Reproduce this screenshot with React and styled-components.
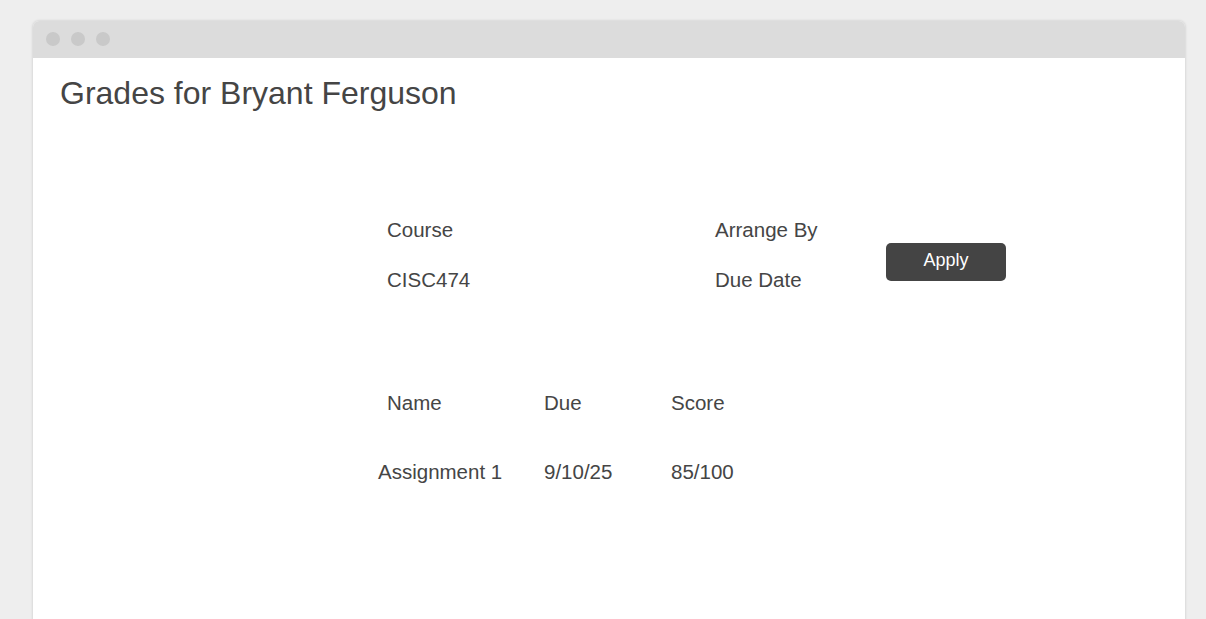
import React from 'react'
import styled, { createGlobalStyle } from 'styled-components'

const GlobalStyle = createGlobalStyle`
    html, body {
        margin: 0;
        padding: 0;
        background: #eeeeee;
        font-family: "Liberation Sans", Arial, sans-serif;
        color: #454545;
        overflow: hidden;
    }
`

const grades = [
    { name: 'Assignment 1', due: '9/10/25', score: '85/100' },
]

export default function App() {
    return (
        <>
            <GlobalStyle />
            <Page>
                <Window>
                    <TitleBar>
                        <Dot />
                        <Dot />
                        <Dot />
                    </TitleBar>
                    <Content>
                        <Heading>Grades for Bryant Ferguson</Heading>
                        <Filters>
                            <FilterColumn width="328px">
                                <FilterText>Course</FilterText>
                                <FilterText>CISC474</FilterText>
                            </FilterColumn>
                            <FilterColumn width="171px">
                                <FilterText>Arrange By</FilterText>
                                <FilterText>Due Date</FilterText>
                            </FilterColumn>
                            <ApplyButton>Apply</ApplyButton>
                        </Filters>
                        <Table>
                            <HeadCell indent="9px">Name</HeadCell>
                            <HeadCell>Due</HeadCell>
                            <HeadCell>Score</HeadCell>
                            {grades.map(g => (
                                <React.Fragment key={g.name}>
                                    <Cell>{g.name}</Cell>
                                    <Cell>{g.due}</Cell>
                                    <Cell>{g.score}</Cell>
                                </React.Fragment>
                            ))}
                        </Table>
                    </Content>
                </Window>
            </Page>
        </>
    )
}

const Page = styled.div`
    height: 619px;
    padding: 21px 21px 0 33px;
    box-sizing: border-box;
`

const Window = styled.div`
    height: 620px;
    background: #ffffff;
    border-radius: 6px 6px 0 0;
    box-shadow: 0 0 3px rgba(0, 0, 0, 0.18);
    display: flex;
    flex-direction: column;
`

const TitleBar = styled.div`
    height: 37px;
    background: #dcdcdc;
    border-radius: 6px 6px 0 0;
    display: flex;
    align-items: center;
    gap: 11px;
    padding-left: 13px;
`

const Dot = styled.span`
    width: 14px;
    height: 14px;
    margin-top: -1px;
    border-radius: 50%;
    background: #c9c9c9;
`

const Content = styled.div`
    display: flex;
    flex-direction: column;
    padding-top: 15px;
`

const Heading = styled.h1`
    margin: 0;
    padding-left: 27px;
    font-size: 32px;
    font-weight: 400;
    line-height: 40px;
`

const Filters = styled.div`
    display: flex;
    align-items: flex-start;
    margin-top: 102px;
    padding-left: 354px;
`

const FilterColumn = styled.div`
    display: flex;
    flex-direction: column;
    gap: 20px;
    width: ${({ width }) => width};
`

const FilterText = styled.div`
    font-size: 20.5px;
    line-height: 30px;
`

const ApplyButton = styled.button`
    margin-top: 28px;
    width: 120px;
    height: 38px;
    border: none;
    border-radius: 5px;
    background: #444444;
    color: #ffffff;
    font-family: "Liberation Sans", Arial, sans-serif;
    font-size: 18px;
    padding: 0 0 4px;
`

const Table = styled.div`
    display: grid;
    grid-template-columns: 166px 127px 120px;
    row-gap: 39px;
    margin-top: 93px;
    padding-left: 345px;
`

const HeadCell = styled.div`
    font-size: 20.5px;
    line-height: 30px;
    padding-left: ${({ indent }) => indent || '0'};
`

const Cell = styled.div`
    font-size: 20.5px;
    line-height: 30px;
`
